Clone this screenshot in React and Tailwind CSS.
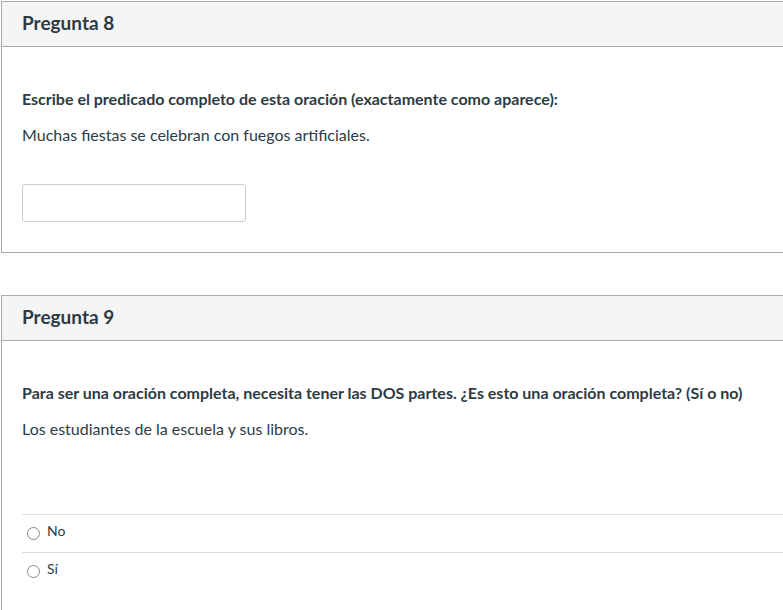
export default function App() {
  return (
    <div className="w-[783px] h-[610px] overflow-hidden bg-white font-['Lato','Liberation_Sans',sans-serif] text-[#2d3b45]">
      {/* Pregunta 8 */}
      <div className="ml-[1px] mt-[1px] w-[830px] border border-[#aaaaaa]">
        <div className="h-[45px] bg-[#f5f5f5] border-b border-[#aaaaaa] px-5 pb-[3px] flex items-center">
          <h2 className="text-[19px] font-bold leading-none">Pregunta 8</h2>
        </div>
        <div className="px-5 pt-[42px] pb-[30px]">
          <p className="text-[16px] leading-5 font-bold">
            Escribe el predicado completo de esta oración (exactamente como aparece):
          </p>
          <p className="mt-4 text-[16px] leading-5">
            Muchas fiestas se celebran con fuegos artificiales.
          </p>
          <input
            type="text"
            className="mt-[39px] block w-[224px] h-[38px] border border-[#c7cdd1] rounded-[3px] px-2 outline-none"
          />
        </div>
      </div>

      {/* Pregunta 9 */}
      <div className="ml-[1px] mt-[42px] w-[830px] border border-[#aaaaaa]">
        <div className="h-[45px] bg-[#f5f5f5] border-b border-[#aaaaaa] px-5 pb-[3px] flex items-center">
          <h2 className="text-[19px] font-bold leading-none">Pregunta 9</h2>
        </div>
        <div className="pl-5 pt-[42px] pb-10">
          <p className="text-[16px] leading-5 font-bold">
            Para ser una oración completa, necesita tener las DOS partes. ¿Es esto una oración completa? (Sí o no)
          </p>
          <p className="mt-4 text-[16px] leading-5">
            Los estudiantes de la escuela y sus libros.
          </p>
          <div className="mt-[75px]">
            {["No", "Sí"].map((opt) => (
              <label
                key={opt}
                className="flex items-center h-[38px] border-t border-[#dddddd] pl-[5px] text-[14px]"
              >
                <span className="w-[13px] h-[13px] rounded-full border border-[#888888] bg-white" />
                <span className="ml-[7px] -mt-[7px]">{opt}</span>
              </label>
            ))}
          </div>
        </div>
      </div>
    </div>
  );
}
